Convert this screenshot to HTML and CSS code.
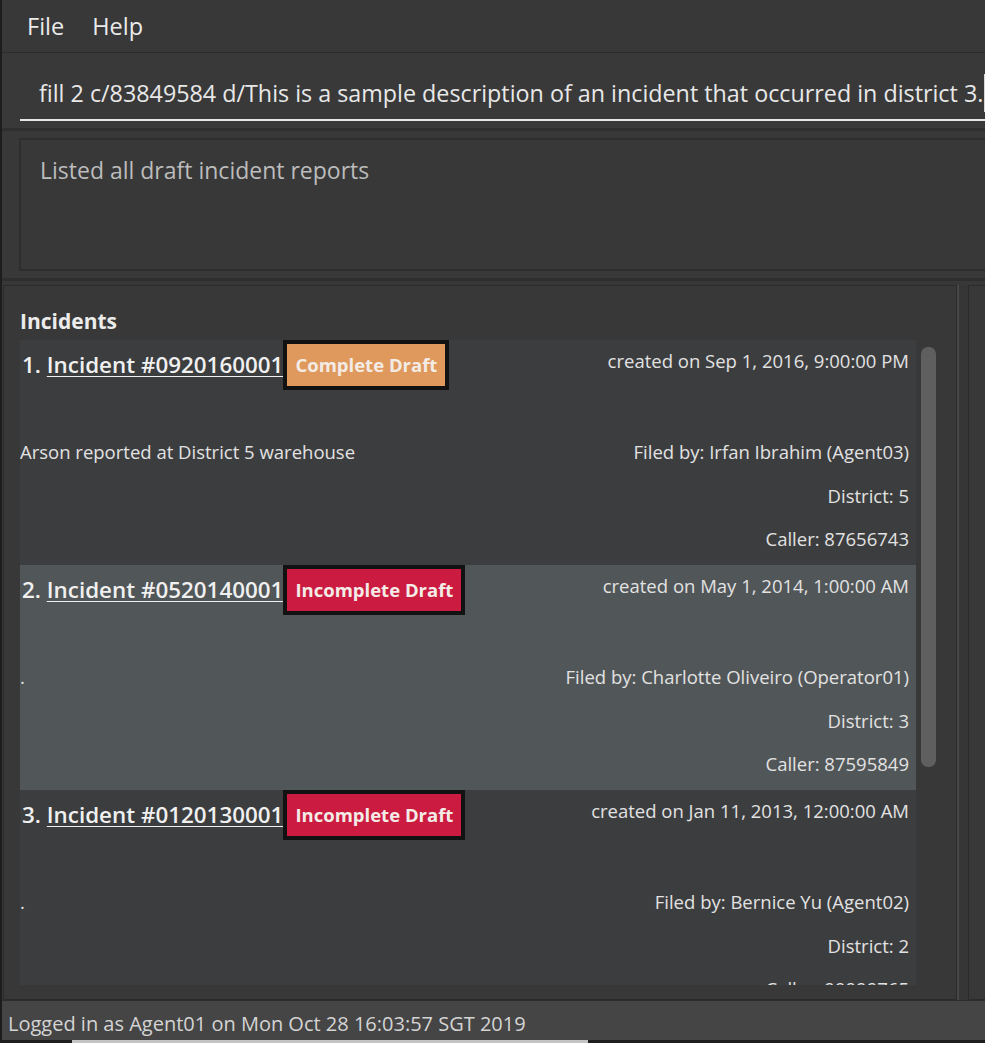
FILE: index.html
```html
<!DOCTYPE html>
<html lang="en">
<head>
<meta charset="utf-8">
<title>Incident Manager</title>
<link rel="stylesheet" href="styles.css">
</head>
<body>
<div class="window">
  <nav class="menubar">
    <span class="menu-item">File</span>
    <span class="menu-item">Help</span>
  </nav>

  <div class="command">
    <div class="field"><span class="field-text">fill 2 c/83849584 d/This is a sample description of an incident that occurred in district 3.</span><span class="caret"></span></div>
  </div>
  <div class="hsep"></div>

  <div class="result-pane">
    <div class="result-box">Listed all draft incident reports</div>
  </div>
  <div class="hsep2"></div>

  <div class="main">
    <section class="panel panel-left">
      <h2 class="panel-title">Incidents</h2>
      <div class="list">
        <div class="cells">
          <article class="cell">
            <div class="cell-head">
              <div class="title-group">
                <span class="title">1. <u class="title-link">Incident #0920160001</u></span>
                <span class="badge badge-complete">Complete Draft</span>
              </div>
              <span class="date">created on Sep 1, 2016, 9:00:00 PM</span>
            </div>
            <div class="cell-body">
              <span class="desc">Arson reported at District 5 warehouse</span>
              <div class="meta">
                <span>Filed by: Irfan Ibrahim (Agent03)</span>
                <span>District: 5</span>
                <span>Caller: 87656743</span>
              </div>
            </div>
          </article>

          <article class="cell cell-selected">
            <div class="cell-head">
              <div class="title-group">
                <span class="title">2. <u class="title-link">Incident #0520140001</u></span>
                <span class="badge badge-incomplete">Incomplete Draft</span>
              </div>
              <span class="date">created on May 1, 2014, 1:00:00 AM</span>
            </div>
            <div class="cell-body">
              <span class="desc">.</span>
              <div class="meta">
                <span>Filed by: Charlotte Oliveiro (Operator01)</span>
                <span>District: 3</span>
                <span>Caller: 87595849</span>
              </div>
            </div>
          </article>

          <article class="cell">
            <div class="cell-head">
              <div class="title-group">
                <span class="title">3. <u class="title-link">Incident #0120130001</u></span>
                <span class="badge badge-incomplete">Incomplete Draft</span>
              </div>
              <span class="date">created on Jan 11, 2013, 12:00:00 AM</span>
            </div>
            <div class="cell-body">
              <span class="desc">.</span>
              <div class="meta">
                <span>Filed by: Bernice Yu (Agent02)</span>
                <span>District: 2</span>
                <span>Caller: 99999765</span>
              </div>
            </div>
          </article>
        </div>
        <div class="vscroll"><div class="vthumb"></div></div>
      </div>
    </section>
    <div class="vsplit"></div>
    <section class="panel panel-right"></section>
  </div>

  <footer class="status">Logged in as Agent01 on Mon Oct 28 16:03:57 SGT 2019</footer>
  <div class="hscroll"><div class="hthumb"></div></div>
</div>
</body>
</html>
```

FILE: styles.css
```css
* { box-sizing: border-box; }

html, body {
  margin: 0;
  padding: 0;
  background: #383838;
  overflow: hidden;
}

body {
  font-family: "Open Sans", "Noto Sans", sans-serif;
  color: #e0e0e0;
}

.window {
  width: 985px;
  height: 1043px;
  border-left: 2px solid #1d1d1d;
  background: #383838;
  overflow: hidden;
}

/* menu bar */
.menubar {
  height: 53px;
  border-bottom: 1px solid #2c2c2c;
  display: flex;
  align-items: center;
  padding-left: 25px;
  gap: 28px;
}
.menu-item {
  font-size: 23.5px;
  line-height: 30px;
  color: #ebebeb;
}

/* command box */
.command {
  height: 75px;
  padding: 14px 0 7px 18px;
  background: #393939;
}
.field {
  height: 54px;
  border-bottom: 2px solid #e6e6e6;
  padding-left: 19px;
  white-space: nowrap;
  overflow: hidden;
  display: flex;
  align-items: center;
}
.field-text {
  font-size: 23.3px;
  line-height: 52px;
  color: #e8e8e8;
}
.caret {
  display: inline-block;
  width: 2px;
  height: 38px;
  margin-left: 1px;
  background: #d8d8d8;
}
.hsep {
  height: 3px;
  background: #2f2f2f;
}

/* result display */
.result-pane {
  height: 147px;
  padding: 7px 0 7px 17px;
}
.result-box {
  height: 133px;
  border: 2px solid #2e2e2e;
  border-right: none;
  padding: 18px 0 0 19px;
  font-size: 23px;
  line-height: 24px;
  color: #bcbcbc;
}
.hsep2 {
  height: 7px;
  border-top: 3px solid #2e2e2e;
}

/* main area */
.main {
  height: 715px;
  display: flex;
  padding-left: 1px;
}
.panel {
  height: 100%;
  border: 1px solid #2b2b2b;
}
.panel-left {
  width: 954px;
  padding-left: 16px;
}
.vsplit {
  width: 11px;
  border-left: 2px solid #474747;
  background: #363636;
}
.panel-right {
  flex: 1;
  border-right: none;
}
.panel-title {
  margin: 0;
  padding-top: 23px;
  margin-bottom: 7px;
  font-size: 21px;
  line-height: 24px;
  font-weight: 700;
  color: #ececec;
}

.list {
  display: flex;
  height: 645px;
}
.cells {
  width: 896px;
  height: 645px;
  overflow: hidden;
}
.vscroll {
  width: 20px;
  padding: 7px 0 0 5px;
}
.vthumb {
  width: 15px;
  height: 420px;
  border-radius: 7px;
  background: #5f5f5f;
}

/* incident cell */
.cell {
  height: 225px;
  padding-right: 7px;
  background: #3c3d3f;
  font-size: 18.5px;
  line-height: 24px;
  color: #e2e2e2;
}
.cell-selected {
  background: #515658;
}
.cell-head {
  height: 50px;
  display: flex;
  justify-content: space-between;
  align-items: flex-start;
}
.title-group {
  height: 50px;
  display: flex;
  align-items: center;
}
.title {
  padding-left: 2px;
  font-size: 22.4px;
  font-weight: 600;
  color: #f0f0f0;
  white-space: nowrap;
}
.title-link {
  text-decoration: underline;
  text-underline-offset: 3px;
  text-decoration-thickness: 1px;
}
.badge {
  height: 50px;
  border: 4px solid #121212;
  padding: 0 8px;
  font-size: 18.5px;
  line-height: 42px;
  font-weight: 700;
  color: #f3ece6;
  white-space: nowrap;
}
.badge-complete {
  background: #e0995c;
}
.badge-incomplete {
  background: #cc1b41;
}
.date {
  padding-top: 9px;
  white-space: nowrap;
}
.cell-body {
  margin-top: 50px;
  display: flex;
  justify-content: space-between;
  align-items: flex-start;
}
.desc {
  white-space: nowrap;
}
.meta {
  display: flex;
  flex-direction: column;
  align-items: flex-end;
  gap: 19.5px;
  white-space: nowrap;
}

/* status bar */
.status {
  height: 40px;
  border-top: 1px solid #2c2c2c;
  background: #454545;
  padding: 7px 0 0 6px;
  font-size: 20px;
  line-height: 32px;
  color: #d4d4d4;
  white-space: nowrap;
}
.hscroll {
  height: 3px;
  background: #1e1e1e;
  padding-left: 70px;
}
.hthumb {
  width: 516px;
  height: 3px;
  background: #c4c4c4;
}
```
